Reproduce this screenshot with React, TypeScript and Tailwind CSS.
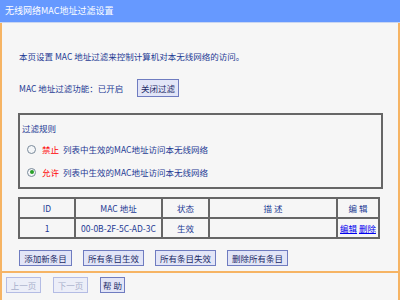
const font = "font-['SimSun','Noto_Sans_CJK_SC',sans-serif]";

function Btn({ label, disabled, w }: { label: string; disabled?: boolean; w: string }) {
  return (
    <button
      className={`${w} flex h-[16px] items-center justify-center border text-[8.5px] leading-none ${
        disabled
          ? 'border-[#b4bce4] bg-[#eceef8] text-[#a8b0cc]'
          : 'border-[#6f7cc0] bg-[#e2e5f7] text-[#1b2a66]'
      }`}
    >
      {label}
    </button>
  );
}

function Radio({ checked }: { checked?: boolean }) {
  return (
    <span className="flex h-[9px] w-[9px] items-center justify-center rounded-full border border-[#7a8a9a] bg-[#f4f6f8]">
      {checked ? <span className="h-[4px] w-[4px] rounded-full bg-[#28a028]" /> : null}
    </span>
  );
}

export default function App() {
  const th = 'border-2 border-[#666] font-normal';
  const td = 'border-2 border-[#666]';
  return (
    <div className={`flex h-[300px] w-[400px] flex-col overflow-hidden bg-[#f6f6f6] text-[8.5px] leading-[12px] text-[#1d3a94] ${font}`}>
      <div className="flex h-[22px] shrink-0 items-center bg-[#6699ff] pl-[5px] text-[9px] text-white">
        无线网络MAC地址过滤设置
      </div>
      <div className="h-[1px] shrink-0 bg-[#c9d6f2]" />
      <div className="flex flex-1 flex-col border-x-2 border-[#f6b464]">
        <div className="flex h-[250px] flex-col border-b-2 border-[#f6b464] pl-[16px] pr-[15px]">
          <p className="mt-[27px] pl-px">本页设置 MAC 地址过滤来控制计算机对本无线网络的访问。</p>
          <div className="mt-[17px] flex h-[18px] items-center pl-px">
            <span className="w-[118px]">MAC 地址过滤功能：已开启</span>
            <Btn label="关闭过滤" w="w-[42px] h-[18px]" />
          </div>

          <div className="mt-[16px] flex h-[76px] flex-col border-2 border-[#666] pl-[2px]">
            <p className="mt-[7px]">过滤规则</p>
            <div className="mt-[9px] flex items-center">
              <span className="ml-[5px] mr-[6px]"><Radio /></span>
              <span className="mr-[4px] text-[#ff0000]">禁止</span>
              <span>列表中生效的MAC地址访问本无线网络</span>
            </div>
            <div className="mt-[11px] flex items-center">
              <span className="ml-[5px] mr-[6px]"><Radio checked /></span>
              <span className="mr-[4px] text-[#ff0000]">允许</span>
              <span>列表中生效的MAC地址访问本无线网络</span>
            </div>
          </div>

          <table className="mt-[8px] w-[362px] border-collapse border-2 border-[#666] text-center">
            <thead>
              <tr className="h-[20px]">
                <th className={`${th} w-[56px]`}>ID</th>
                <th className={`${th} w-[87px]`}>MAC 地址</th>
                <th className={`${th} w-[47px]`}>状态</th>
                <th className={`${th} w-[128px]`}>描&nbsp;述</th>
                <th className={th}>编&nbsp;辑</th>
              </tr>
            </thead>
            <tbody>
              <tr className="h-[20px]">
                <td className={td}>1</td>
                <td className={td}>00-0B-2F-5C-AD-3C</td>
                <td className={td}>生效</td>
                <td className={td}></td>
                <td className={`${td} text-[#0000ee]`}>
                  <a className="underline">编辑</a> <a className="underline">删除</a>
                </td>
              </tr>
            </tbody>
          </table>

          <div className="mt-[11px] flex gap-[11px] pl-[1px]">
            <Btn label="添加新条目" w="w-[53px]" />
            <Btn label="所有条目生效" w="w-[61px]" />
            <Btn label="所有条目失效" w="w-[61px]" />
            <Btn label="删除所有条目" w="w-[61px]" />
          </div>
        </div>
        <div className="mt-[4px] flex gap-[12px] pl-[4px]">
          <Btn label="上一页" disabled w="w-[35px]" />
          <Btn label="下一页" disabled w="w-[35px]" />
          <Btn label="帮 助" w="w-[25px]" />
        </div>
      </div>
    </div>
  );
}
